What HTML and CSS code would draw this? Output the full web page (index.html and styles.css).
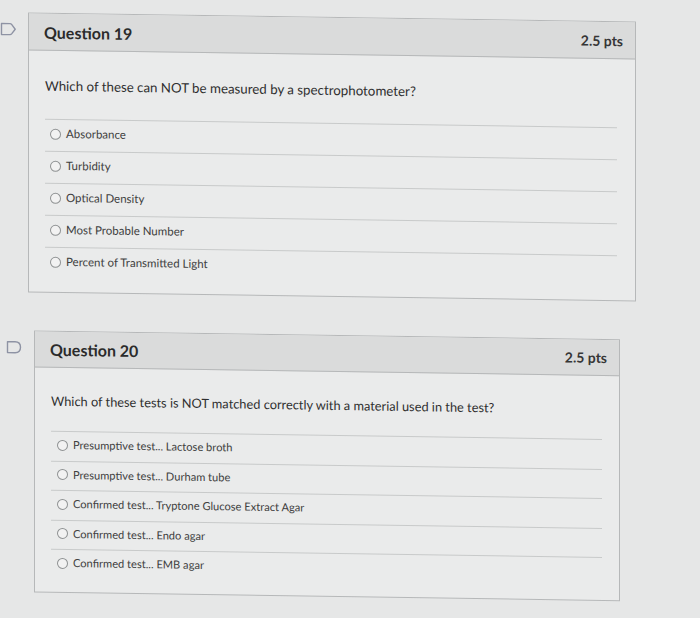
FILE: index.html
```html
<!DOCTYPE html>
<html lang="en">
<head>
<meta charset="utf-8">
<title>Quiz</title>
<link rel="stylesheet" href="styles.css">
</head>
<body>
<main class="quiz">
  <section class="question question--near">
    <span class="bookmark">
      <svg viewBox="0 0 17 14" width="17" height="14"><path d="M1.5 1.5 H10 Q11 1.5 11.8 2.5 L15.2 7 L11.8 11.5 Q11 12.5 10 12.5 H1.5 Z" fill="none" stroke="#8e93a4" stroke-width="1.4" stroke-linejoin="round"/></svg>
    </span>
    <div class="card">
      <header class="card-head">
        <h2 class="card-title">Question 19</h2>
        <span class="pts">2.5 pts</span>
      </header>
      <div class="card-body">
        <p class="prompt">Which of these can NOT be measured by a spectrophotometer?</p>
        <ul class="answers">
          <li class="answer"><span class="radio"></span>Absorbance</li>
          <li class="answer"><span class="radio"></span>Turbidity</li>
          <li class="answer"><span class="radio"></span>Optical Density</li>
          <li class="answer"><span class="radio"></span>Most Probable Number</li>
          <li class="answer"><span class="radio"></span>Percent of Transmitted Light</li>
        </ul>
      </div>
    </div>
  </section>

  <section class="question question--far">
    <span class="bookmark">
      <svg viewBox="0 0 17 14" width="17" height="14"><path d="M1.5 1.5 H9 Q14.5 1.5 14.5 7 Q14.5 12.5 9 12.5 H1.5 Z" fill="none" stroke="#8e93a4" stroke-width="1.4" stroke-linejoin="round"/></svg>
    </span>
    <div class="card">
      <header class="card-head">
        <h2 class="card-title">Question 20</h2>
        <span class="pts">2.5 pts</span>
      </header>
      <div class="card-body">
        <p class="prompt">Which of these tests is NOT matched correctly with a material used in the test?</p>
        <ul class="answers">
          <li class="answer"><span class="radio"></span>Presumptive test... Lactose broth</li>
          <li class="answer"><span class="radio"></span>Presumptive test... Durham tube</li>
          <li class="answer"><span class="radio"></span>Confirmed test... Tryptone Glucose Extract Agar</li>
          <li class="answer"><span class="radio"></span>Confirmed test... Endo agar</li>
          <li class="answer"><span class="radio"></span>Confirmed test... EMB agar</li>
        </ul>
      </div>
    </div>
  </section>
</main>
</body>
</html>
```

FILE: styles.css
```css
* { box-sizing: border-box; }

html, body {
  margin: 0;
  padding: 0;
  background: #e6e7e7;
  font-family: Lato, "Open Sans", "Liberation Sans", sans-serif;
  color: #333;
  height: 100%;
  overflow: hidden;
}

.quiz {
  padding-top: 12px;
  transform: skewY(0.85deg);
  transform-origin: 0 0;
}

.question {
  display: flex;
  align-items: flex-start;
  gap: 11px;
}

.question--near {
  --card-w: 608px;
  --head-h: 37px;
  --prompt-pt: 25px;
  --prompt-mb: 23px;
  --prompt-size: 13.3px;
  --row-pt: 6px;
  --row-pb: 9px;
  --inset-l: 16px;
  --inset-r: 18px;
  --radio-ml: 5px;
  --opt-size: 11.5px;
  --pad-b: 13px;
  margin-left: 0;
}

.question--far {
  --card-w: 586px;
  --head-h: 36px;
  --prompt-pt: 23px;
  --prompt-mb: 20px;
  --prompt-size: 12.8px;
  --row-pt: 5px;
  --row-pb: 7.5px;
  --inset-l: 16px;
  --inset-r: 17px;
  --radio-ml: 6px;
  --opt-size: 11.1px;
  --pad-b: 13px;
  margin-left: 6px;
  margin-top: 38px;
}

.bookmark {
  display: block;
  width: 17px;
  height: 14px;
  margin-top: 10px;
}

.bookmark svg { display: block; }

.card {
  width: var(--card-w);
  border: 1px solid #b6b8b9;
  background: #eaebeb;
}

.card-head {
  height: var(--head-h);
  display: flex;
  align-items: center;
  justify-content: space-between;
  padding: 0 12px 0 15px;
  background: #dadbdb;
  border-bottom: 1px solid #b6b8b9;
}

.card-title {
  margin: 0;
  font-size: 16px;
  font-weight: 700;
  color: #2b2b2b;
}

.pts {
  font-size: 14px;
  font-weight: 700;
  color: #363636;
}

.card-body {
  padding: var(--prompt-pt) var(--inset-r) var(--pad-b) var(--inset-l);
}

.prompt {
  margin: 0 0 var(--prompt-mb) 0;
  font-size: var(--prompt-size);
  line-height: 20px;
  color: #2f2f2f;
}

.answers {
  list-style: none;
  margin: 0;
  padding: 0;
}

.answer {
  display: flex;
  align-items: center;
  gap: 5px;
  border-top: 1px solid #c8caca;
  padding: var(--row-pt) 0 var(--row-pb) var(--radio-ml);
  font-size: var(--opt-size);
  line-height: 16px;
  color: #404040;
}

.radio {
  width: 11px;
  height: 11px;
  border: 1px solid #8f9293;
  border-radius: 50%;
  background: #f2f2f2;
  flex: none;
}
```
